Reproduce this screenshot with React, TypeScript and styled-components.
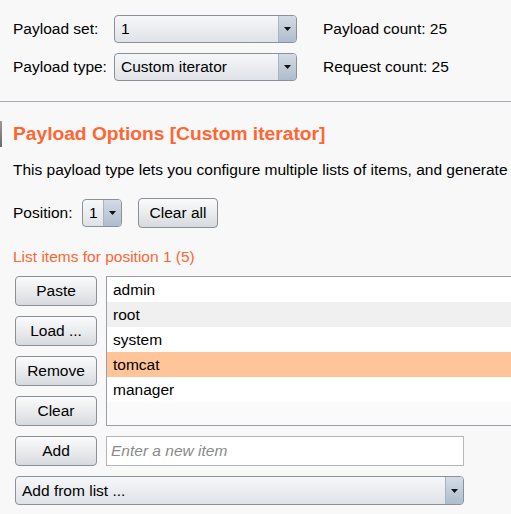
import React from "react";
import styled, { createGlobalStyle } from "styled-components";

const Global = createGlobalStyle`
  html, body { margin: 0; padding: 0; background: #f8f8f8; overflow: hidden; }
  body { font-family: "Liberation Sans", Arial, sans-serif; font-size: 15.5px; color: #000; }
`;

const Page = styled.div`
  width: 511px;
  height: 514px;
  overflow: hidden;
  display: flex;
  flex-direction: column;
`;

const TopGrid = styled.div`
  display: grid;
  grid-template-columns: 101px 183px auto;
  grid-auto-rows: 28px;
  row-gap: 10px;
  padding: 15px 0 20px 13px;
  align-items: center;
`;

const Label = styled.span`
  white-space: nowrap;
`;

const CountLabel = styled.span`
  padding-left: 26px;
  white-space: nowrap;
`;

const SelectBox = styled.div<{ $w: number; $h?: number }>`
  width: ${(p) => p.$w}px;
  height: ${(p) => p.$h ?? 28}px;
  box-sizing: border-box;
  border: 1px solid #8b9099;
  border-radius: 4px;
  background: linear-gradient(#f6f7f9, #dfe2e7);
  display: flex;
  overflow: hidden;
  flex-shrink: 0;
`;

const SelectText = styled.span`
  flex: 1;
  padding-left: 6px;
  display: flex;
  align-items: center;
  white-space: nowrap;
`;

const ArrowPart = styled.span`
  width: 17px;
  border-left: 1px solid #a9b4c2;
  background: linear-gradient(#d3dce6, #aebccc);
  display: flex;
  align-items: center;
  justify-content: center;
`;

const Arrow = () => (
  <ArrowPart>
    <svg width="7" height="4" viewBox="0 0 7 4">
      <path d="M0 0H7L3.5 4Z" fill="#111" />
    </svg>
  </ArrowPart>
);

const Separator = styled.div`
  height: 1px;
  background: #a7abb3;
  flex-shrink: 0;
`;

const Section = styled.div`
  display: flex;
  flex-direction: column;
`;

const TitleRow = styled.div`
  display: flex;
  align-items: center;
  height: 26px;
  margin-top: 19px;
`;

const Marker = styled.div`
  width: 2px;
  height: 26px;
  background: linear-gradient(#9a9a9a, #6a6a6a);
  margin-right: 11px;
`;

const Title = styled.h2`
  margin: 0;
  font-size: 19.2px;
  font-weight: bold;
  color: #ff6633;
  white-space: nowrap;
`;

const Desc = styled.p`
  margin: 14px 0 0 13px;
  white-space: nowrap;
  line-height: 18px;
`;

const PosRow = styled.div`
  display: flex;
  align-items: center;
  margin: 19px 0 0 13px;
  height: 30px;
`;

const PosLabel = styled.span`
  width: 69px;
  flex-shrink: 0;
`;

const Button = styled.button<{ $w?: number; $ml?: number }>`
  font-family: "Liberation Sans", Arial, sans-serif;
  font-size: 15.5px;
  color: #000;
  width: ${(p) => p.$w ?? 82}px;
  margin-left: ${(p) => p.$ml ?? 0}px;
  height: 30px;
  box-sizing: border-box;
  border: 1px solid #8b8f96;
  border-radius: 4px;
  background: linear-gradient(#fbfbfc, #e9eaed 55%, #d6d9de);
  padding: 0;
  flex-shrink: 0;
`;

const ListLabel = styled.div`
  color: #ff6633;
  margin: 20px 0 0 13px;
  line-height: 18px;
`;

const ListArea = styled.div`
  display: flex;
  gap: 9px;
  margin: 10px 0 0 15px;
`;

const ButtonCol = styled.div`
  display: flex;
  flex-direction: column;
  gap: 10px;
`;

const ListBox = styled.div`
  width: 440px;
  flex-shrink: 0;
  height: 150px;
  box-sizing: border-box;
  border: 1px solid #9a9ea6;
  background: #fafafa;
  display: flex;
  flex-direction: column;
`;

const ListRow = styled.div<{ $bg: string }>`
  height: 25px;
  background: ${(p) => p.$bg};
  display: flex;
  align-items: center;
  padding-left: 6px;
`;

const AddRow = styled.div`
  display: flex;
  gap: 9px;
  margin: 10px 0 0 15px;
`;

const Input = styled.div`
  width: 358px;
  height: 30px;
  box-sizing: border-box;
  border: 1px solid #b4b7bc;
  background: #fff;
  display: flex;
  align-items: center;
  padding-left: 4px;
  color: #8a8a8a;
  font-style: italic;
`;

const FromListWrap = styled.div`
  margin: 10px 0 0 15px;
`;

const items = [
  { t: "admin", bg: "#ffffff" },
  { t: "root", bg: "#f0f0f0" },
  { t: "system", bg: "#ffffff" },
  { t: "tomcat", bg: "#ffc599" },
  { t: "manager", bg: "#ffffff" },
];

export default function App() {
  return (
    <Page>
      <Global />
      <TopGrid>
        <Label>Payload set:</Label>
        <SelectBox $w={183}>
          <SelectText>1</SelectText>
          <Arrow />
        </SelectBox>
        <CountLabel>Payload count: 25</CountLabel>
        <Label>Payload type:</Label>
        <SelectBox $w={183}>
          <SelectText>Custom iterator</SelectText>
          <Arrow />
        </SelectBox>
        <CountLabel>Request count: 25</CountLabel>
      </TopGrid>
      <Separator />
      <Section>
        <TitleRow>
          <Marker />
          <Title>Payload Options [Custom iterator]</Title>
        </TitleRow>
        <Desc>This payload type lets you configure multiple lists of items, and generate payloads</Desc>
        <PosRow>
          <PosLabel>Position:</PosLabel>
          <SelectBox $w={40} $h={28}>
            <SelectText>1</SelectText>
            <Arrow />
          </SelectBox>
          <Button $w={80} $ml={16}>Clear all</Button>
        </PosRow>
        <ListLabel>List items for position 1 (5)</ListLabel>
        <ListArea>
          <ButtonCol>
            <Button>Paste</Button>
            <Button>Load ...</Button>
            <Button>Remove</Button>
            <Button>Clear</Button>
          </ButtonCol>
          <ListBox>
            {items.map((it) => (
              <ListRow key={it.t} $bg={it.bg}>{it.t}</ListRow>
            ))}
          </ListBox>
        </ListArea>
        <AddRow>
          <Button>Add</Button>
          <Input>Enter a new item</Input>
        </AddRow>
        <FromListWrap>
          <SelectBox $w={449} $h={29}>
            <SelectText>Add from list ...</SelectText>
            <Arrow />
          </SelectBox>
        </FromListWrap>
      </Section>
    </Page>
  );
}
